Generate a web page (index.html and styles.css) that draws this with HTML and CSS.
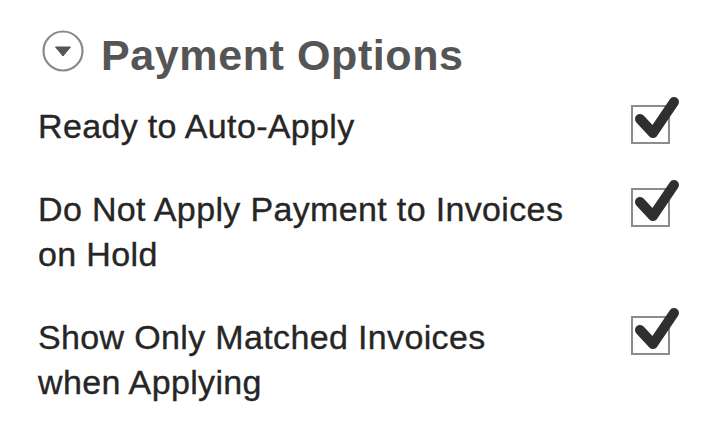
FILE: index.html
```html
<!DOCTYPE html>
<html>
<head>
<meta charset="utf-8">
<link rel="stylesheet" href="styles.css">
</head>
<body>
<div class="panel">
  <div class="header">
    <svg class="toggle" width="42" height="42" viewBox="0 0 42 42">
      <circle cx="21" cy="21" r="19.5" fill="none" stroke="#8a8a8a" stroke-width="2.2"/>
      <path d="M13.5 17 L28.5 17 L21 26 Z" fill="#555" stroke="#555" stroke-width="1" stroke-linejoin="round"/>
    </svg>
    <h2 class="title">Payment Options</h2>
  </div>
  <div class="rows">
    <div class="row">
      <div class="label">Ready to Auto-Apply</div>
      <svg class="check" width="40" height="40" viewBox="0 0 40 40">
        <rect x="1" y="1" width="37" height="37" fill="#fff" stroke="#8c8c8c" stroke-width="2"/>
        <path d="M9 14 L22 28 L43 -3" fill="none" stroke="#2f2f2f" stroke-width="10" stroke-linecap="round" stroke-linejoin="round"/>
      </svg>
    </div>
    <div class="row">
      <div class="label">Do Not Apply Payment to Invoices<br>on Hold</div>
      <svg class="check" width="40" height="40" viewBox="0 0 40 40">
        <rect x="1" y="1" width="37" height="37" fill="#fff" stroke="#8c8c8c" stroke-width="2"/>
        <path d="M9 14 L22 28 L43 -3" fill="none" stroke="#2f2f2f" stroke-width="10" stroke-linecap="round" stroke-linejoin="round"/>
      </svg>
    </div>
    <div class="row">
      <div class="label">Show Only Matched Invoices<br>when Applying</div>
      <svg class="check" width="40" height="40" viewBox="0 0 40 40">
        <rect x="1" y="1" width="37" height="37" fill="#fff" stroke="#8c8c8c" stroke-width="2"/>
        <path d="M9 14 L22 28 L43 -3" fill="none" stroke="#2f2f2f" stroke-width="10" stroke-linecap="round" stroke-linejoin="round"/>
      </svg>
    </div>
  </div>
</div>
</body>
</html>
```
FILE: styles.css
```css
html, body {
  margin: 0;
  padding: 0;
  background: #fff;
}
.panel {
  padding: 26px 0 0 38px;
  font-family: "Liberation Sans", Arial, Helvetica, sans-serif;
}
.header {
  display: flex;
  align-items: center;
  height: 50px;
  margin-left: 4px;
}
.toggle {
  display: block;
  flex: none;
  overflow: visible;
}
.title {
  margin: 8px 0 0 17px;
  font-size: 43px;
  font-weight: bold;
  letter-spacing: 0.6px;
  color: #555;
  line-height: 50px;
}
.rows {
  margin-top: 28px;
  display: flex;
  flex-direction: column;
  gap: 38px;
}
.row {
  display: flex;
  align-items: flex-start;
}
.label {
  width: 593px;
  font-size: 34px;
  letter-spacing: 0.35px;
  line-height: 45px;
  color: #262626;
  -webkit-text-stroke: 0.35px #262626;
}
.check {
  display: block;
  flex: none;
  overflow: visible;
  margin-top: 1px;
}
```
